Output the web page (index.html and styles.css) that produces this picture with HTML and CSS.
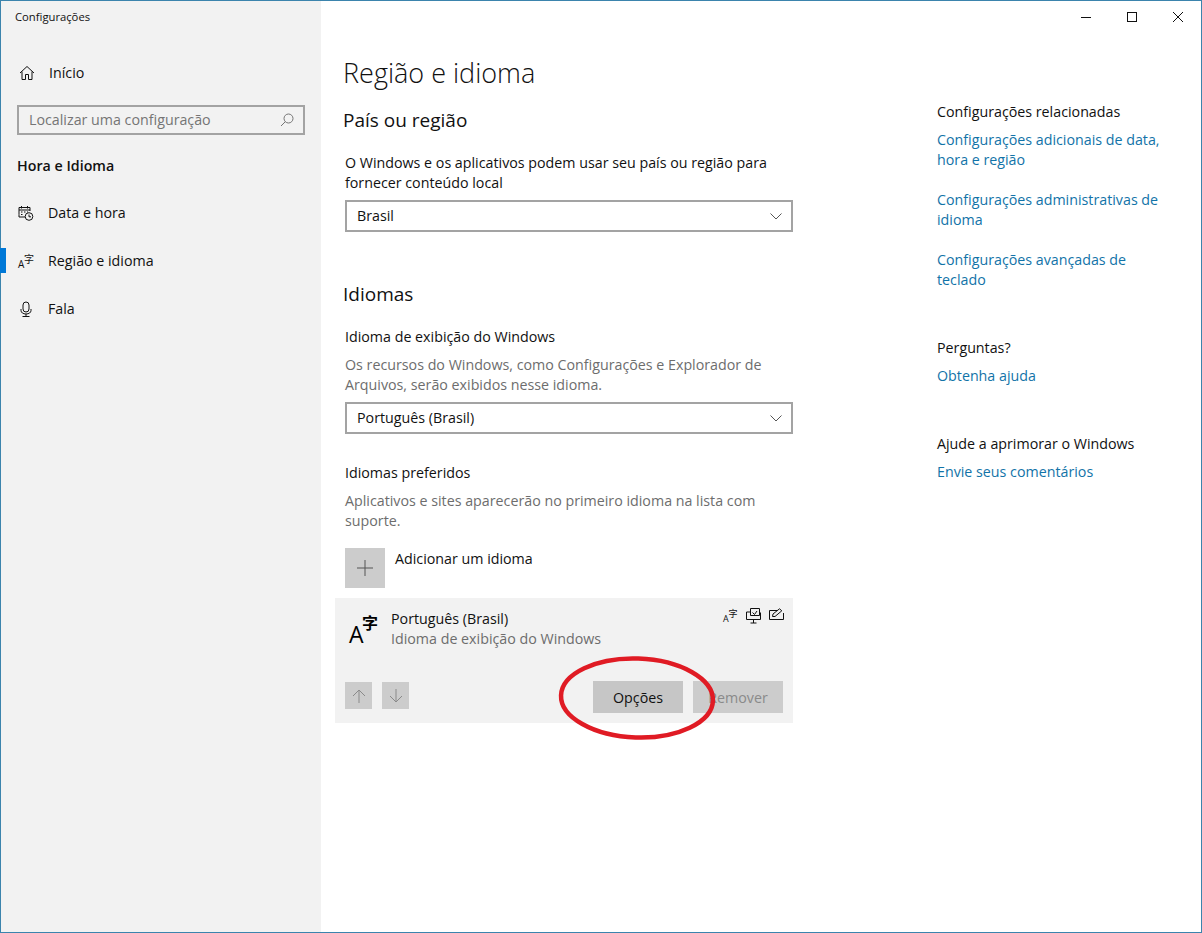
FILE: index.html
```html
<!DOCTYPE html>
<html lang="pt-BR">
<head>
<meta charset="utf-8">
<title>Configurações</title>
<link rel="stylesheet" href="styles.css">
</head>
<body>
<div class="window">
  <aside class="sidebar">
    <div class="app-title">Configurações</div>
    <div class="nav-row home">
      <svg class="nav-icon" viewBox="0 0 16 16"><path d="M1 8 8 1.5 15 8M3 6.5V14.5H6.5V9.5H9.5V14.5H13V6.5"/></svg>
      <span>Início</span>
    </div>
    <div class="search">
      <span>Localizar uma configuração</span>
      <svg class="search-icon" viewBox="0 0 14 14"><circle cx="8.5" cy="5.5" r="4.5"/><path d="M5.3 8.7 1 13"/></svg>
    </div>
    <div class="group-title">Hora e Idioma</div>
    <div class="nav-row">
      <svg class="nav-icon" viewBox="0 0 16 16"><path d="M1 9.5V2.5H12V6M1 5H12M3.5 1V3.5M9.5 1V3.5M7 12H1V9.5"/><path d="M3 7H4.5M6 7H7.500M9 7H10M3 9.500H4.500"/><circle cx="11" cy="11.500" r="3.800"/><path d="M11 9.500V11.800H13"/></svg>
      <span>Data e hora</span>
    </div>
    <div class="nav-row active">
      <svg class="nav-icon lang-icon" viewBox="0 0 16 16"><text class="lang-a" x="0" y="15" font-size="10">A</text><text class="lang-z" x="6" y="10" font-size="10">字</text></svg>
      <span>Região e idioma</span>
    </div>
    <div class="nav-row">
      <svg class="nav-icon" viewBox="0 0 16 16"><rect x="5" y="1" width="6" height="10" rx="3"/><path d="M3 8V9.500C3 11.500 5 13 8 13S13 11.500 13 9.500V8M8 13V15.500M4.500 15.500H11.500"/></svg>
      <span>Fala</span>
    </div>
  </aside>
  <div class="main">
    <div class="caption">
      <div class="cap-btn"><svg viewBox="0 0 10 10"><path d="M0 5.500H10"/></svg></div>
      <div class="cap-btn"><svg viewBox="0 0 10 10"><rect x=".5" y=".5" width="9" height="9"/></svg></div>
      <div class="cap-btn"><svg viewBox="0 0 10 10"><path d="M0 0 10 10M10 0 0 10"/></svg></div>
    </div>
    <div class="content">
      <main class="col">
        <h1>Região e idioma</h1>
        <h2 class="h-country">País ou região</h2>
        <p class="text p-country">O Windows e os aplicativos podem usar seu país ou região para fornecer conteúdo local</p>
        <div class="select s-country"><span>Brasil</span><svg viewBox="0 0 12 7"><path d="M.5.500 6 6 11.500.500"/></svg></div>
        <h2 class="h-lang">Idiomas</h2>
        <p class="text p-label">Idioma de exibição do Windows</p>
        <p class="text muted p-desc">Os recursos do Windows, como Configurações e Explorador de Arquivos, serão exibidos nesse idioma.</p>
        <div class="select s-country"><span>Português (Brasil)</span><svg viewBox="0 0 12 7"><path d="M.5.500 6 6 11.500.500"/></svg></div>
        <p class="text p-pref">Idiomas preferidos</p>
        <p class="text muted p-desc">Aplicativos e sites aparecerão no primeiro idioma na lista com suporte.</p>
        <div class="add">
          <div class="add-box"><svg viewBox="0 0 16 16"><path d="M8 0V16M0 8H16"/></svg></div>
          <span>Adicionar um idioma</span>
        </div>
        <div class="lang-item">
          <div class="item-top">
            <svg class="item-glyph" viewBox="0 0 30 34"><text class="lang-a" x="0" y="32" font-size="23">A</text><text class="lang-z strong" x="13" y="18" font-size="16">字</text></svg>
            <div class="item-text">
              <div>Português (Brasil)</div>
              <div class="muted">Idioma de exibição do Windows</div>
            </div>
            <div class="features">
              <svg class="f-lang" viewBox="0 0 15 15"><text class="lang-a" x="0" y="14" font-size="9">A</text><text class="lang-z" x="5.500" y="9" font-size="9">字</text></svg>
              <svg class="f-mon" viewBox="0 0 15 16"><path d="M4.500 4H.5V11.500H14.500V4.500M4.500 7.500V.5H13.500V7.500H4.500M6.500 4.500 8.500 6.500 11 3M7.500 11.500V15M4.500 15H10.500"/></svg>
              <svg class="f-pen" viewBox="0 0 15 12"><path d="M8 2.500H.5V11.500H14.500V5M3.500 8.500 4 6 10.500.8 12.800 2.800 6 8.500Z"/></svg>
            </div>
          </div>
          <div class="item-bottom">
            <div class="arrow"><svg viewBox="0 0 14 14"><path d="M7 14V1M1 7 7 1 13 7"/></svg></div>
            <div class="arrow"><svg viewBox="0 0 14 14"><path d="M7 0V13M1 7 7 13 13 7"/></svg></div>
            <div class="btn opt">Opções</div>
            <div class="btn off">Remover</div>
          </div>
        </div>
      </main>
      <section class="related">
        <div class="rel-first">Configurações relacionadas</div>
        <a class="link l-tight">Configurações adicionais de data, hora e região</a>
        <a class="link l-next">Configurações administrativas de idioma</a>
        <a class="link l-next">Configurações avançadas de teclado</a>
        <div class="rel-head">Perguntas?</div>
        <a class="link l-tight">Obtenha ajuda</a>
        <div class="rel-head">Ajude a aprimorar o Windows</div>
        <a class="link l-tight">Envie seus comentários</a>
      </section>
    </div>
  </div>
  <svg class="annotation" viewBox="0 0 170 96"><ellipse cx="85" cy="48" rx="76" ry="39.500" transform="rotate(2 85 48)"/></svg>
</div>
</body>
</html>
```
FILE: styles.css
```css
* { box-sizing: border-box; }
html, body { margin: 0; padding: 0; }
body {
  width: 1202px;
  height: 933px;
  overflow: hidden;
  background: #fff;
  color: #111;
  font-family: "Open Sans", "Noto Sans CJK SC", sans-serif;
  font-size: 14.25px;
  line-height: 20px;
}
svg { display: block; overflow: visible; fill: none; stroke: currentColor; stroke-width: 1; }
svg text { fill: currentColor; stroke: none; font-family: "Open Sans", "Noto Sans CJK SC", sans-serif; }
svg .lang-z { font-family: "Noto Sans CJK SC", sans-serif; }
svg .strong { font-weight: 700; }

.window {
  position: relative;
  width: 1202px;
  height: 933px;
  border: 1px solid #3b84ad;
  display: flex;
}
.sidebar { width: 320px; flex: none; background: #f2f2f2; }
.app-title { height: 32px; padding: 6px 0 0 14px; font-size: 11.25px; }
.nav-row {
  position: relative;
  height: 48px;
  display: flex;
  align-items: center;
  padding-left: 17px;
}
.nav-row.home { height: 48px; margin-top: 16px; padding-left: 18px; }
.nav-row span { margin-left: 14px; }
.nav-icon { width: 16px; height: 16px; flex: none; }
.active::before {
  content: "";
  position: absolute;
  left: -1px;
  top: 11px;
  width: 6px;
  height: 25px;
  background: #0078d7;
}
.search {
  height: 30px;
  margin: 8px 16px 0 16px;
  border: 2px solid #a3a3a3;
  padding: 0 9px 0 10px;
  display: flex;
  align-items: center;
  justify-content: space-between;
  color: #757575;
}
.search-icon { width: 14px; height: 14px; }
.group-title { height: 40px; margin-top: 11px; padding-left: 16px; font-weight: 600; line-height: 40px; }
.group-title + .nav-row { margin-top: 3px; }

.main { flex: 1; display: flex; flex-direction: column; }
.caption { height: 32px; display: flex; justify-content: flex-end; }
.cap-btn { width: 46px; height: 32px; display: flex; align-items: center; justify-content: center; }
.cap-btn svg { width: 10px; height: 10px; margin-top: -1px; }
.content { display: flex; padding: 22px 0 0 21px; }
.col { width: 451px; flex: none; padding-left: 1px; }
h1 { margin: 0; padding: 2px 0 2px; font-size: 27px; font-weight: 300; line-height: 32px; }
h2 { margin: 0; font-size: 19px; font-weight: 400; line-height: 28px; }
.h-country { margin-top: 15px; }
.h-lang { margin-top: 48px; }
.text { margin: 0 0 0 2px; }
.muted { color: #6d6d6d; }
.p-country { margin-top: 19px; }
.p-label { margin-top: 19px; }
.p-desc { margin-top: 8px; }
.p-pref { margin-top: 29px; }
.select {
  width: 448px;
  height: 32px;
  margin: 7px 0 0 2px;
  border: 2px solid #a3a3a3;
  padding: 0 9px 0 10px;
  display: flex;
  align-items: center;
  justify-content: space-between;
}
.select svg { width: 12px; height: 7px; color: #555; }
.add { margin: 17px 0 0 2px; display: flex; align-items: flex-start; }
.add-box {
  width: 40px;
  height: 40px;
  background: #cccccc;
  display: flex;
  align-items: center;
  justify-content: center;
  color: #555;
}
.add-box svg { width: 16px; height: 16px; }
.add span { margin-left: 10px; line-height: 22px; }
.lang-item {
  width: 458px;
  height: 125px;
  margin: 10px 0 0 -8px;
  padding: 11px 10px 10px;
  background: #f2f2f2;
  display: flex;
  flex-direction: column;
  justify-content: space-between;
}
.item-top { display: flex; align-items: flex-start; }
.item-glyph { width: 30px; height: 34px; margin: 2px 0 0 4px; color: #000; }
.item-text { margin-left: 12px; flex: 1; }
.features { display: flex; align-items: flex-start; margin: -1px -1px 0 0; }
.f-lang { width: 15px; height: 15px; }
.f-mon { width: 15px; height: 16px; margin-left: 8px; }
.f-pen { width: 15px; height: 12px; margin-left: 8px; }
.item-bottom { display: flex; align-items: flex-start; }
.arrow {
  width: 27px;
  height: 27px;
  margin: 1px 10px 0 0;
  background: #cccccc;
  color: #8a8a8a;
  display: flex;
  align-items: center;
  justify-content: center;
}
.arrow svg { width: 14px; height: 14px; }
.btn {
  width: 90px;
  height: 32px;
  padding-top: 2px;
  background: #c6c6c6;
  display: flex;
  align-items: center;
  justify-content: center;
}
.opt { margin-left: auto; }
.off { margin-left: 10px; color: #8a8a8a; background: #cccccc; }
.related { width: 226px; margin-left: 144px; padding-top: 47px; }
.link { display: block; color: #1273a8; }
.l-tight { margin-top: 8px; }
.l-next { margin-top: 20px; }
.rel-head { margin-top: 48px; }
.annotation {
  position: absolute;
  left: 551px;
  top: 649px;
  width: 170px;
  height: 96px;
  color: #e01b24;
  stroke-width: 4.500;
}
```
